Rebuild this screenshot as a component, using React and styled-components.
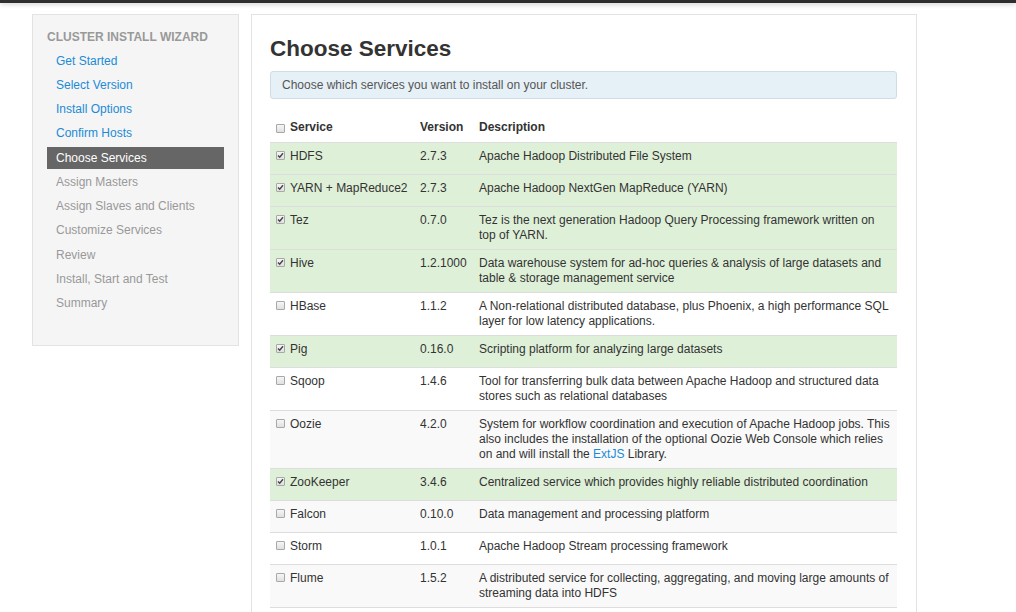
import styled, { createGlobalStyle } from "styled-components";

const GlobalStyle = createGlobalStyle`
  html, body {
    margin: 0;
    padding: 0;
    overflow: hidden;
    background: #fff;
    font-family: "Liberation Sans", Arial, sans-serif;
    font-size: 12px;
    color: #333;
  }
`;

const TopBar = styled.div`
  height: 3px;
  background: #2e2e2e;
  box-shadow: 0 1px 5px rgba(0, 0, 0, 0.25);
`;

const Page = styled.div`
  display: flex;
  align-items: flex-start;
  gap: 12px;
  padding: 11px 0 0 32px;
`;

const Sidebar = styled.div`
  width: 207px;
  box-sizing: border-box;
  background: #f5f5f5;
  border: 1px solid #e3e3e3;
  padding: 15px 14px 31px;
`;

const SidebarTitle = styled.div`
  font-weight: bold;
  font-size: 12px;
  line-height: 15px;
  color: #999;
  text-transform: uppercase;
  margin-bottom: 4.5px;
`;

const NavList = styled.div`
  display: flex;
  flex-direction: column;
  gap: 2.25px;
`;

const NavItem = styled.a`
  display: block;
  height: 22px;
  line-height: 22px;
  padding: 0 9px;
  font-size: 12px;
  text-decoration: none;
  color: ${(p) => (p.$active ? "#fff" : p.$done ? "#1b8bd6" : "#999")};
  background: ${(p) => (p.$active ? "#666" : "transparent")};
  cursor: ${(p) => (p.$done ? "pointer" : "default")};
`;

const Main = styled.div`
  width: 666px;
  min-height: 700px;
  box-sizing: border-box;
  background: #fff;
  border: 1px solid #e3e3e3;
  padding: 21px 19px 20px 18px;
`;

const Title = styled.h2`
  margin: 0 0 9px;
  font-size: 22.5px;
  line-height: 26px;
  font-weight: bold;
  color: #333;
`;

const Alert = styled.div`
  background: #e6f0f7;
  border: 1px solid #d0dde7;
  border-radius: 3px;
  padding: 6px 11px 5px;
  line-height: 15px;
  color: #555;
  margin-bottom: 16px;
`;

const Table = styled.table`
  width: 100%;
  border-collapse: collapse;
  table-layout: fixed;
`;

const Th = styled.th`
  text-align: left;
  font-weight: bold;
  line-height: 15px;
  padding: 5px 6px 7px;
  color: #333;
`;

const Row = styled.tr`
  border-top: 1px solid #ddd;
  border-bottom: 1px solid #ddd;
  background: ${(p) => (p.$selected ? "#dff0d8" : p.$striped ? "#f9f9f9" : "#fff")};
`;

const Td = styled.td`
  vertical-align: top;
  line-height: 15px;
  padding: 6px 6px ${(p) => (p.$service ? "10px" : "6px")};
  color: #333;
`;

const Box = styled.span`
  display: inline-block;
  box-sizing: border-box;
  width: 9px;
  height: 9px;
  margin-right: 5px;
  border: 1px solid #a8a8a8;
  border-radius: 1px;
  background: linear-gradient(#f6f6f6, #e0e0e0);
  vertical-align: ${(p) => (p.$header ? "-2px" : "0")};
  position: relative;

  svg {
    position: absolute;
    left: 0;
    top: 0;
  }
`;

const Link = styled.a`
  color: #1b8bd6;
  text-decoration: none;
`;

function Checkbox({ checked, header }) {
  return (
    <Box $header={header}>
      {checked && (
        <svg width="7" height="7" viewBox="0 0 7 7">
          <path d="M1 3.6 L2.7 5.3 L6 1.2" fill="none" stroke="#444" strokeWidth="1.4" />
        </svg>
      )}
    </Box>
  );
}

const steps = [
  ["Get Started", "done"],
  ["Select Version", "done"],
  ["Install Options", "done"],
  ["Confirm Hosts", "done"],
  ["Choose Services", "active"],
  ["Assign Masters"],
  ["Assign Slaves and Clients"],
  ["Customize Services"],
  ["Review"],
  ["Install, Start and Test"],
  ["Summary"],
];

const services = [
  { name: "HDFS", version: "2.7.3", checked: true, desc: "Apache Hadoop Distributed File System" },
  { name: "YARN + MapReduce2", version: "2.7.3", checked: true, desc: "Apache Hadoop NextGen MapReduce (YARN)" },
  { name: "Tez", version: "0.7.0", checked: true, desc: "Tez is the next generation Hadoop Query Processing framework written on top of YARN." },
  { name: "Hive", version: "1.2.1000", checked: true, desc: "Data warehouse system for ad-hoc queries & analysis of large datasets and table & storage management service" },
  { name: "HBase", version: "1.1.2", desc: "A Non-relational distributed database, plus Phoenix, a high performance SQL layer for low latency applications." },
  { name: "Pig", version: "0.16.0", checked: true, desc: "Scripting platform for analyzing large datasets" },
  { name: "Sqoop", version: "1.4.6", desc: "Tool for transferring bulk data between Apache Hadoop and structured data stores such as relational databases" },
  {
    name: "Oozie",
    version: "4.2.0",
    desc: (
      <>
        System for workflow coordination and execution of Apache Hadoop jobs. This also includes the installation of
        the optional Oozie Web Console which relies on and will install the <Link href="#">ExtJS</Link> Library.
      </>
    ),
  },
  { name: "ZooKeeper", version: "3.4.6", checked: true, desc: "Centralized service which provides highly reliable distributed coordination" },
  { name: "Falcon", version: "0.10.0", desc: "Data management and processing platform" },
  { name: "Storm", version: "1.0.1", desc: "Apache Hadoop Stream processing framework" },
  { name: "Flume", version: "1.5.2", desc: "A distributed service for collecting, aggregating, and moving large amounts of streaming data into HDFS" },
];

export default function App() {
  return (
    <>
      <GlobalStyle />
      <TopBar />
      <Page>
        <Sidebar>
          <SidebarTitle>Cluster Install Wizard</SidebarTitle>
          <NavList>
            {steps.map(([label, state]) => (
              <NavItem key={label} $active={state === "active"} $done={state === "done"}>
                {label}
              </NavItem>
            ))}
          </NavList>
        </Sidebar>
        <Main>
          <Title>Choose Services</Title>
          <Alert>Choose which services you want to install on your cluster.</Alert>
          <Table>
            <colgroup>
              <col style={{ width: 144 }} />
              <col style={{ width: 59 }} />
              <col />
            </colgroup>
            <thead>
              <tr>
                <Th>
                  <Checkbox header />
                  Service
                </Th>
                <Th>Version</Th>
                <Th>Description</Th>
              </tr>
            </thead>
            <tbody>
              {services.map((s, i) => (
                <Row key={s.name} $selected={s.checked} $striped={i % 2 === 1}>
                  <Td $service>
                    <Checkbox checked={s.checked} />
                    {s.name}
                  </Td>
                  <Td>{s.version}</Td>
                  <Td>{s.desc}</Td>
                </Row>
              ))}
            </tbody>
          </Table>
        </Main>
      </Page>
    </>
  );
}
